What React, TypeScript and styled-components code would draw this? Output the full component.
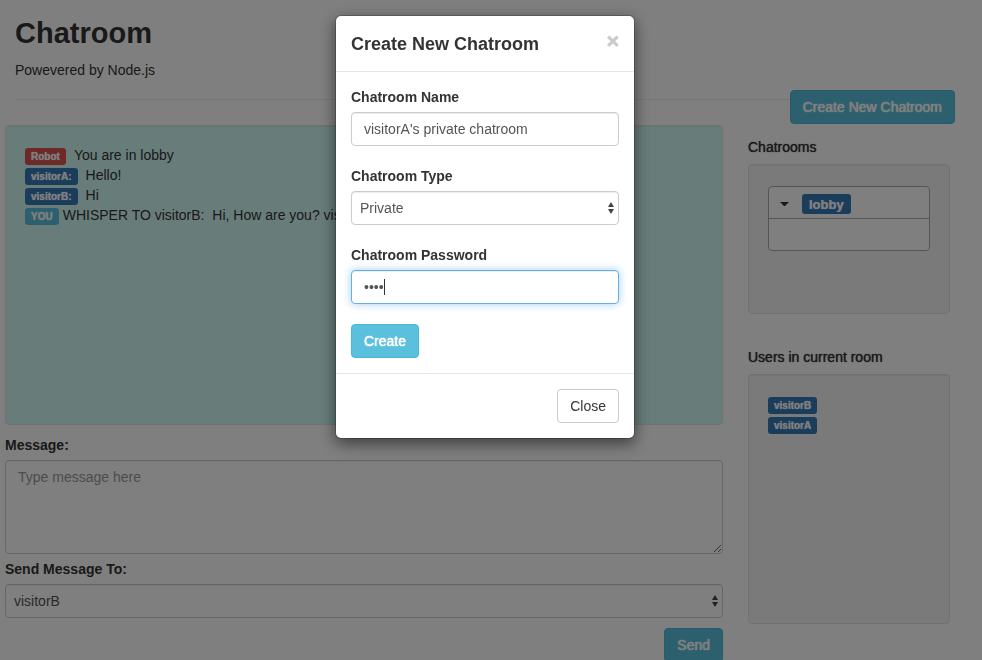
import React, { useState } from "react";
import styled, { createGlobalStyle, css } from "styled-components";

const GlobalStyle = createGlobalStyle`
  *, *::before, *::after { box-sizing: border-box; }
  html, body { margin: 0; min-height: 100%; }
  body {
    background: #fff;
    color: #333;
    font: 14px/20px "Helvetica Neue", "Liberation Sans", Arial, sans-serif;
    overflow: hidden;
  }
  button, input, select, textarea { font: inherit; margin: 0; }
`;

const Header = styled.header`
  margin: 0 40px 25px 15px;
  padding: 16px 0 19px;
  border-bottom: 1px solid #eee;
`;

const Title = styled.h1`
  margin: 0 0 9px;
  font-size: 29px;
  line-height: 35px;
  font-weight: 700;
`;

const Tagline = styled.p`
  margin: 0;
`;

const Columns = styled.div`
  display: grid;
  grid-template-columns: minmax(0, 1fr) 202px;
  gap: 25px;
  align-items: start;
  padding: 0 32px 15px 5px;
`;

const Main = styled.main`
  display: flex;
  flex-direction: column;
`;

const Sidebar = styled.aside`
  display: flex;
  flex-direction: column;
  margin-top: -35px;
`;

const Well = styled.div<{ $height: number; $tone?: "mint" }>`
  min-height: ${(p) => p.$height}px;
  padding: 19px;
  background: ${(p) => (p.$tone === "mint" ? "#d0faf4" : "#f5f5f5")};
  border: 1px solid #e3e3e3;
  border-radius: 4px;
  box-shadow: inset 0 1px 1px rgba(0, 0, 0, 0.05);
`;

const Line = styled.div`
  display: flex;
  white-space: pre;
  height: 20px;
`;

const tones = { red: "#d9534f", blue: "#337ab7", cyan: "#5bc0de" };

const Tag = styled.span<{ $tone: keyof typeof tones; $large?: boolean }>`
  flex: none;
  align-self: flex-end;
  height: ${(p) => (p.$large ? 20 : 17)}px;
  padding: 0 ${(p) => (p.$large ? 7 : 6)}px;
  border-radius: 3px;
  background: ${(p) => tones[p.$tone]};
  color: #fff;
  font-size: ${(p) => (p.$large ? 13 : 10)}px;
  line-height: ${(p) => (p.$large ? 21 : 17)}px;
  font-weight: 700;
  text-shadow: 0 0 1px #fff;
`;

const Said = styled.span<{ $close?: boolean }>`
  margin-left: ${(p) => (p.$close ? 4 : 8)}px;
`;

const Label = styled.label`
  margin-bottom: 5px;
  font-weight: 700;
`;

const MessageLabel = styled(Label)`
  margin-top: 10px;
`;

const SectionTitle = styled.h2`
  margin: 0 0 7px;
  font-size: 14px;
  line-height: 20px;
  font-weight: 400;
  text-shadow: 0 0 1px #333;
`;

const control = css`
  display: block;
  width: 100%;
  padding: 6px 12px;
  color: #555;
  background: #fff;
  border: 1px solid #ccc;
  border-radius: 4px;
  box-shadow: inset 0 1px 1px rgba(0, 0, 0, 0.075);
  outline: none;
`;

const Input = styled.input`
  ${control}
  height: 34px;
  &:focus {
    border-color: #66afe9;
    box-shadow: inset 0 1px 1px rgba(0, 0, 0, 0.075), 0 0 8px rgba(102, 175, 233, 0.6);
  }
`;

const PasswordWrap = styled.div`
  position: relative;
`;

const Caret = styled.span`
  position: absolute;
  left: 33px;
  top: 9px;
  width: 1px;
  height: 16px;
  background: #333;
  pointer-events: none;
`;

const TextArea = styled.textarea`
  ${control}
  height: 94px;
  margin-bottom: 5px;
  resize: vertical;
  &::placeholder { color: #999; opacity: 1; }
`;

const SelectWrap = styled.div`
  position: relative;
`;

const NativeSelect = styled.select`
  ${control}
  height: 34px;
  padding: 0 24px 0 8px;
  appearance: none;
`;

const Arrows = styled.svg`
  position: absolute;
  right: 4px;
  top: 11px;
  pointer-events: none;
`;

const Button = styled.button<{ $kind?: "info" }>`
  height: 34px;
  padding: 0 12px;
  border: 1px solid ${(p) => (p.$kind ? "#46b8da" : "#ccc")};
  border-radius: 4px;
  background: ${(p) => (p.$kind ? "#5bc0de" : "#fff")};
  color: ${(p) => (p.$kind ? "#fff" : "#333")};
  text-shadow: ${(p) => (p.$kind ? "0 0 1px #fff, 0 0 1px #fff" : "none")};
  cursor: pointer;
`;

const SendButton = styled(Button)`
  align-self: flex-end;
  margin-top: 10px;
`;

const NewRoomButton = styled(Button)`
  align-self: flex-end;
  margin: 0 -5px 13px 0;
`;

const Section = styled.section`
  & + & { margin-top: 33px; }
`;

const Room = styled.div`
  margin-top: 2px;
  border: 1px solid #aaa;
  border-radius: 4px;
  background: #fff;
`;

const RoomToggle = styled.button`
  display: flex;
  align-items: center;
  gap: 13px;
  width: 100%;
  height: 32px;
  padding: 3px 11px 0;
  border: 0;
  border-bottom: 1px solid #aaa;
  background: none;
  color: #333;
  cursor: pointer;
  ${Tag} { align-self: center; }
`;

const RoomBody = styled.div`
  height: 31px;
`;

const UserList = styled.ul`
  margin: 0;
  padding: 0;
  list-style: none;
`;

const Overlay = styled.div`
  position: fixed;
  inset: 0;
  display: flex;
  justify-content: center;
  align-items: flex-start;
  padding: 15px 12px 15px 0;
  background: rgba(0, 0, 0, 0.5);
  overflow: hidden;
`;

const Dialog = styled.div`
  width: 300px;
  background: #fff;
  background-clip: padding-box;
  border: 1px solid rgba(0, 0, 0, 0.2);
  border-radius: 6px;
  box-shadow: 0 5px 15px rgba(0, 0, 0, 0.5);
`;

const DialogHeader = styled.div`
  display: flex;
  justify-content: space-between;
  align-items: flex-start;
  padding: 15px 15px 13px;
  border-bottom: 1px solid #e5e5e5;
`;

const DialogTitle = styled.h4`
  margin: 0;
  font-size: 18px;
  line-height: 27px;
  font-weight: 700;
`;

const Dismiss = styled.button`
  padding: 0;
  border: 0;
  background: none;
  color: #000;
  font-size: 21px;
  line-height: 19px;
  font-weight: 700;
  -webkit-text-stroke: 1px #000;
  opacity: 0.2;
  cursor: pointer;
`;

const DialogForm = styled.form`
  display: flex;
  flex-direction: column;
  align-items: flex-start;
  gap: 20px;
  padding: 15px;
`;

const Field = styled.div`
  display: flex;
  flex-direction: column;
  width: 100%;
`;

const DialogFooter = styled.div`
  display: flex;
  justify-content: flex-end;
  padding: 15px;
  border-top: 1px solid #e5e5e5;
`;

type SelectProps = { id: string; options: string[]; initial: string };

function Select({ id, options, initial }: SelectProps) {
  return (
    <SelectWrap>
      <NativeSelect id={id} defaultValue={initial}>
        {options.map((o) => (
          <option key={o}>{o}</option>
        ))}
      </NativeSelect>
      <Arrows width="8" height="12" viewBox="0 0 8 12" fill="#444" aria-hidden="true">
        <path d="M4 0 7 5H1z M1 7h6L4 12z" />
      </Arrows>
    </SelectWrap>
  );
}

const messages: { from: string; tone: keyof typeof tones; text: string; close?: boolean }[] = [
  { from: "Robot", tone: "red", text: "You are in lobby" },
  { from: "visitorA:", tone: "blue", text: "Hello!" },
  { from: "visitorB:", tone: "blue", text: "Hi" },
  { from: "YOU", tone: "cyan", text: "WHISPER TO visitorB:  Hi, How are you? visitorA", close: true },
];

function PasswordInput({ id }: { id: string }) {
  const [untouched, setUntouched] = useState(true);
  return (
    <PasswordWrap>
      <Input
        id={id}
        type="password"
        defaultValue="1234"
        autoFocus
        onKeyDown={() => setUntouched(false)}
        onBlur={() => setUntouched(false)}
      />
      {untouched && <Caret />}
    </PasswordWrap>
  );
}

function CreateRoomDialog({ onClose }: { onClose: () => void }) {
  return (
    <Overlay>
      <Dialog role="dialog" aria-modal="true" aria-labelledby="dialog-title">
        <DialogHeader>
          <DialogTitle id="dialog-title">Create New Chatroom</DialogTitle>
          <Dismiss type="button" aria-label="Close" onClick={onClose}>×</Dismiss>
        </DialogHeader>
        <DialogForm onSubmit={(e) => e.preventDefault()}>
          <Field>
            <Label htmlFor="room-name">Chatroom Name</Label>
            <Input id="room-name" defaultValue="visitorA's private chatroom" />
          </Field>
          <Field>
            <Label htmlFor="room-type">Chatroom Type</Label>
            <Select id="room-type" options={["Public", "Private"]} initial="Private" />
          </Field>
          <Field>
            <Label htmlFor="room-password">Chatroom Password</Label>
            <PasswordInput id="room-password" />
          </Field>
          <Button $kind="info" type="submit">Create</Button>
        </DialogForm>
        <DialogFooter>
          <Button type="button" onClick={onClose}>Close</Button>
        </DialogFooter>
      </Dialog>
    </Overlay>
  );
}

export default function App() {
  const [open, setOpen] = useState(true);
  return (
    <>
      <GlobalStyle />
      <Header>
        <Title>Chatroom</Title>
        <Tagline>Powevered by Node.js</Tagline>
      </Header>
      <Columns>
        <Main>
          <Well $height={300} $tone="mint">
            {messages.map((m) => (
              <Line key={m.from}>
                <Tag $tone={m.tone}>{m.from}</Tag>
                <Said $close={m.close}>{m.text}</Said>
              </Line>
            ))}
          </Well>
          <MessageLabel htmlFor="message">Message:</MessageLabel>
          <TextArea id="message" placeholder="Type message here" />
          <Label htmlFor="recipient">Send Message To:</Label>
          <Select id="recipient" options={["visitorA", "visitorB"]} initial="visitorB" />
          <SendButton $kind="info" type="button">Send</SendButton>
        </Main>
        <Sidebar>
          <NewRoomButton $kind="info" type="button" onClick={() => setOpen(true)}>
            Create New Chatroom
          </NewRoomButton>
          <Section>
            <SectionTitle>Chatrooms</SectionTitle>
            <Well $height={150}>
              <Room>
                <RoomToggle type="button">
                  <svg width="9" height="5" viewBox="0 0 9 5" fill="#333" aria-hidden="true">
                    <path d="M0 0h9L5 4H4z" />
                  </svg>
                  <Tag $tone="blue" $large>lobby</Tag>
                </RoomToggle>
                <RoomBody />
              </Room>
            </Well>
          </Section>
          <Section>
            <SectionTitle>Users in current room</SectionTitle>
            <Well $height={250}>
              <UserList>
                {["visitorB", "visitorA"].map((u) => (
                  <Line as="li" key={u}>
                    <Tag $tone="blue">{u}</Tag>
                  </Line>
                ))}
              </UserList>
            </Well>
          </Section>
        </Sidebar>
      </Columns>
      {open && <CreateRoomDialog onClose={() => setOpen(false)} />}
    </>
  );
}
